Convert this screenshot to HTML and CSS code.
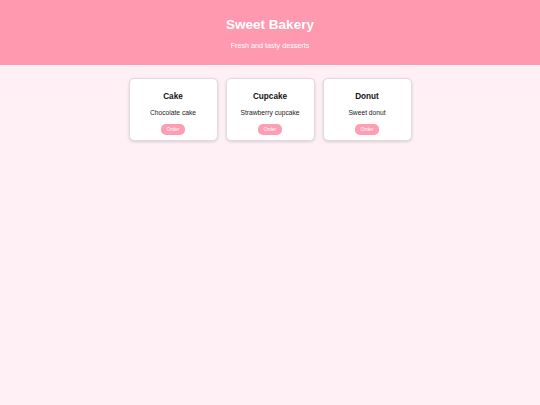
FILE: index.html
```html
<!DOCTYPE html>
<html>
<head>
<meta charset="utf-8">
<link rel="stylesheet" href="styles.css">
</head>
<body>
<header class="hero">
  <h1 class="title">Sweet Bakery</h1>
  <p class="subtitle">Fresh and tasty desserts</p>
</header>
<main class="cards">
  <div class="card">
    <h2 class="card-title">Cake</h2>
    <p class="card-desc">Chocolate cake</p>
    <button class="order">Order</button>
  </div>
  <div class="card">
    <h2 class="card-title">Cupcake</h2>
    <p class="card-desc">Strawberry cupcake</p>
    <button class="order">Order</button>
  </div>
  <div class="card">
    <h2 class="card-title">Donut</h2>
    <p class="card-desc">Sweet donut</p>
    <button class="order">Order</button>
  </div>
</main>
</body>
</html>
```
FILE: styles.css
```css
html, body {
  margin: 0;
  padding: 0;
}
body {
  background: #fff0f5;
  font-family: "Liberation Sans", Arial, sans-serif;
  width: 540px;
  height: 405px;
}
.hero {
  background: #ff99b0;
  height: 65px;
  box-sizing: border-box;
  padding-top: 17px;
  text-align: center;
  color: #fff;
}
.title {
  margin: 0;
  font-size: 13.5px;
  line-height: 16px;
  font-weight: bold;
}
.subtitle {
  margin: 7.5px 0 0;
  font-size: 7.2px;
  line-height: 9px;
}
.cards {
  display: flex;
  justify-content: center;
  gap: 8px;
  padding-top: 13px;
}
.card {
  width: 89px;
  height: 63px;
  box-sizing: border-box;
  background: #fff;
  border-radius: 5px;
  border: 1px solid #e0dcde;
  box-shadow: 0 1px 3px rgba(0, 0, 0, 0.15);
  padding-top: 13px;
  text-align: center;
  display: flex;
  flex-direction: column;
  align-items: center;
}
.card-title {
  margin: 0;
  font-size: 8.2px;
  line-height: 10px;
  font-weight: bold;
  color: #111;
}
.card-desc {
  margin: 6px 0 0;
  font-size: 6.7px;
  line-height: 9px;
  color: #222;
}
.order {
  margin-top: 6.5px;
  width: 24px;
  height: 11px;
  padding: 0;
  border: none;
  border-radius: 5px;
  background: #ff9db4;
  color: #fff;
  font-family: "Liberation Sans", Arial, sans-serif;
  font-size: 5px;
  line-height: 11px;
}
```
